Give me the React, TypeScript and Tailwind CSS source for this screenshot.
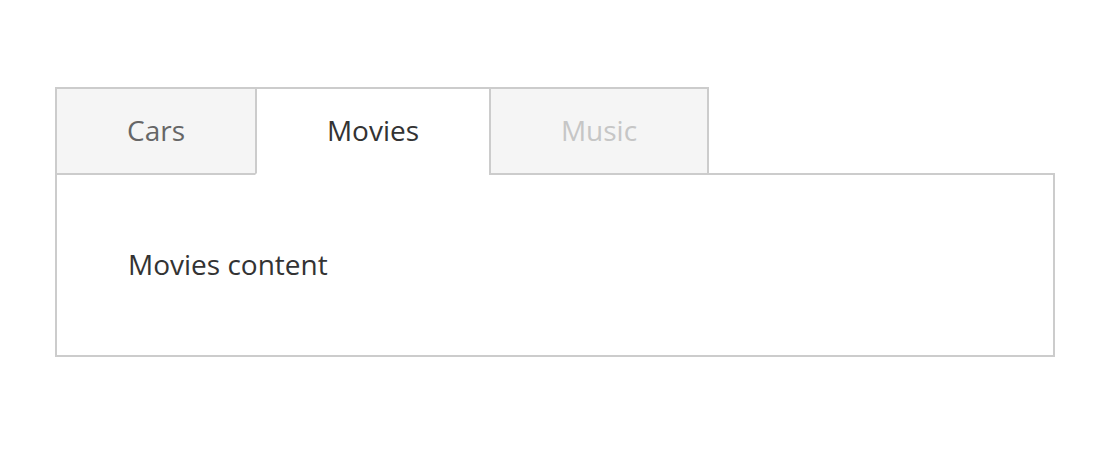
import { useState } from 'react';

type Tab = {
  id: string;
  label: string;
  width: string;
  disabled?: boolean;
};

const tabs: Tab[] = [
  { id: 'cars', label: 'Cars', width: 'w-[202px]' },
  { id: 'movies', label: 'Movies', width: 'w-[236px]' },
  { id: 'music', label: 'Music', width: 'w-[220px]', disabled: true },
];

export default function App() {
  const [active, setActive] = useState('movies');
  const current = tabs.find((t) => t.id === active);

  return (
    <div
      className="min-h-[472px] w-full bg-white pl-[55px] pt-[87px]"
      style={{ fontFamily: '"Open Sans", "Noto Sans", sans-serif' }}
    >
      <div className="w-[1000px]">
        <div className="relative z-10 -mb-[2px] flex">
          {tabs.map((tab, index) => {
            const isActive = tab.id === active;
            return (
              <button
                key={tab.id}
                disabled={tab.disabled}
                onClick={() => setActive(tab.id)}
                className={`${tab.width} ${index > 0 ? '-ml-[2px]' : ''} h-[88px] border-2 border-[#cccccc] pt-[21px] pb-[23px] text-center text-[28px] leading-[38px] ${
                  isActive
                    ? 'border-b-white bg-white text-[#333333]'
                    : tab.disabled
                      ? 'cursor-default bg-[#f5f5f5] text-[#c6c6c6]'
                      : 'bg-[#f5f5f5] text-[#666666]'
                }`}
              >
                {tab.label}
              </button>
            );
          })}
        </div>
        <div className="border-2 border-[#cccccc] pl-[71px] pt-[70px] pb-[72px] text-[28px] leading-[38px] text-[#333333]">
          {current?.label} content
        </div>
      </div>
    </div>
  );
}
